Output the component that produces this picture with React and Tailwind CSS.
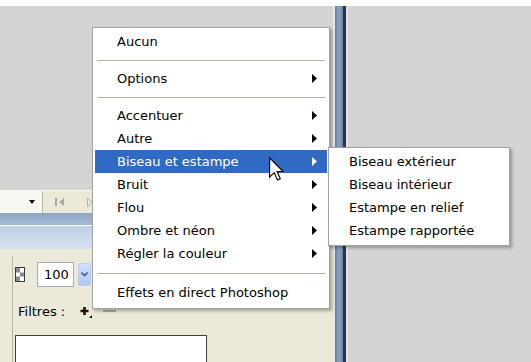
import React from 'react';

const font = { fontFamily: '"DejaVu Sans", Tahoma, sans-serif' };

const mainItems = [
    { label: 'Aucun' },
    { sep: true, h: 'h-[14px]' },
    { label: 'Options', sub: true },
    { sep: true, h: 'h-[14px]' },
    { label: 'Accentuer', sub: true },
    { label: 'Autre', sub: true },
    { label: 'Biseau et estampe', sub: true, active: true },
    { label: 'Bruit', sub: true },
    { label: 'Flou', sub: true },
    { label: 'Ombre et néon', sub: true },
    { label: 'Régler la couleur', sub: true },
    { sep: true, h: 'h-[16px]' },
    { label: 'Effets en direct Photoshop' },
];

const subItems = ['Biseau extérieur', 'Biseau intérieur', 'Estampe en relief', 'Estampe rapportée'];

const Arrow = ({ white }) => (
    <svg width="5" height="9" viewBox="0 0 5 9">
        <path d="M0 0 L5 4.5 L0 9 Z" fill={white ? '#ffffff' : '#000000'} />
    </svg>
);

const Cursor = () => (
    <svg width="15" height="24" viewBox="0 0 12 19" className="absolute left-[269px] top-[157px]">
        <path d="M0.5 0.5 L0.5 16 L4.2 12.4 L6.8 18.3 L9 17.3 L6.5 11.5 L11.3 11.5 Z" fill="#ffffff" stroke="#000000" strokeWidth="0.9" strokeLinejoin="miter" />
    </svg>
);

const Checker = () => (
    <svg width="10" height="15" viewBox="0 0 10 15">
        <rect x="0.5" y="0.5" width="9" height="14" fill="#ffffff" stroke="#3a3a3a" />
        <rect x="1" y="1" width="4" height="4.5" fill="#8a8a8a" />
        <rect x="5" y="5.5" width="4" height="4" fill="#8a8a8a" />
        <rect x="1" y="9.5" width="4" height="4.5" fill="#8a8a8a" />
    </svg>
);

const MainMenu = () => (
    <div className="absolute left-[92px] top-[27px] w-[238px] bg-white border border-[#a3a29c] shadow-[2px_2px_3px_rgba(0,0,0,0.3)] pt-[2px] pb-[4px] text-[13px] text-black">
        {mainItems.map((it, i) => it.sep ? (
            <div key={i} className={`${it.h} flex items-center px-[4px]`}>
                <div className="h-px w-full bg-[#b5b3a8]"></div>
            </div>
        ) : (
            <div key={i} className={`h-[23px] mx-[2px] flex items-center justify-between pl-[22px] pr-[10px] ${it.active ? 'bg-[#316ac5] text-white' : ''}`}>
                <span>{it.label}</span>
                {it.sub && <Arrow white={it.active} />}
            </div>
        ))}
    </div>
);

const SubMenu = () => (
    <div className="absolute left-[328px] top-[147px] w-[182px] bg-white border border-[#a3a29c] shadow-[2px_2px_3px_rgba(0,0,0,0.3)] pt-[2px] pb-[3px] text-[13px] text-black">
        {subItems.map((s) => (
            <div key={s} className="h-[23px] flex items-center pl-[20px]">{s}</div>
        ))}
    </div>
);

export default function App() {
    return (
        <div className="relative w-[531px] h-[362px] overflow-hidden flex flex-col bg-[#d4d4d4]" style={font}>
            <div className="h-[6px] bg-white"></div>
            <div className="flex flex-1">
                {/* left dock */}
                <div className="w-[333px] flex flex-col">
                    <div className="h-[184px]"></div>
                    {/* toolbar */}
                    <div className="h-[23px] bg-[#ece9d8] border-t border-[#f8f7f2] flex items-center">
                        <div className="w-[43px] h-full bg-[#f7f6f1] border-r border-[#bcb9ad] flex items-center justify-end pr-[7px]">
                            <svg width="6" height="4" viewBox="0 0 6 4"><path d="M0 0 L6 0 L3 4 Z" fill="#000" /></svg>
                        </div>
                        <div className="ml-[12px] flex items-center gap-[2px]">
                            <div className="w-[2px] h-[8px] bg-[#a8a8a8]"></div>
                            <svg width="5" height="8" viewBox="0 0 5 8"><path d="M5 0 L0 4 L5 8 Z" fill="#a8a8a8" /></svg>
                        </div>
                        <svg className="ml-[23px]" width="6" height="9" viewBox="0 0 6 9"><path d="M0.5 0.5 L5.5 4.5 L0.5 8.5 Z" fill="none" stroke="#b0b0b0" /></svg>
                    </div>
                    {/* panel header */}
                    <div className="h-[12px] bg-gradient-to-b from-[#8ba6c3] to-[#a6bcd4]"></div>
                    <div className="h-px bg-white"></div>
                    <div className="h-[23px] bg-gradient-to-b from-[#bfd1e6] to-[#d4e1ef]"></div>
                    {/* panel body */}
                    <div className="flex-1 bg-[#ece9d8] pt-[7px] pl-[12px]">
                        <div className="h-full border-l border-[#b9b7ab] pl-[2px] flex flex-col">
                            <div className="flex items-center h-[25px] mt-[6px]">
                                <Checker />
                                <div className="ml-[12px] w-[37px] h-[25px] bg-white border border-[#a5acb5] flex items-center pl-[6px] text-[13px] text-black">100</div>
                                <div className="ml-[4px] w-[13px] h-[23px] rounded-[2px] bg-gradient-to-b from-[#d2e0fb] to-[#aec6f0] border border-[#b9cdf3] flex items-center justify-center">
                                    <svg width="7" height="5" viewBox="0 0 7 5"><path d="M0.5 0.5 L3.5 3.5 L6.5 0.5" fill="none" stroke="#4d6185" strokeWidth="1.6" /></svg>
                                </div>
                            </div>
                            <div className="flex items-center h-[20px] mt-[15px] text-[13px] text-black">
                                <span className="ml-[3px]">Filtres :</span>
                                <svg className="ml-[15px]" width="13" height="13" viewBox="0 0 13 13">
                                    <path d="M4.5 1 L4.5 9 M0.5 5 L8.5 5" stroke="#2a0a0a" strokeWidth="2.6" />
                                    <path d="M9 12 L12 9 L12 12 Z" fill="#000" />
                                </svg>
                                <div className="ml-[10px] w-[13px] h-[2px] bg-[#a9a9a9] -mt-[3px]"></div>
                            </div>
                            <div className="mt-[13px] w-[192px] flex-1 bg-white border border-[#404040] border-b-0"></div>
                        </div>
                    </div>
                </div>
                {/* splitter */}
                <div className="w-[15px] flex">
                    <div className="w-[2px] bg-[#e6e6e6]"></div>
                    <div className="w-[8px] bg-gradient-to-r from-[#5f80a2] via-[#8aa6c3] to-[#6684a4]"></div>
                    <div className="w-[3px] bg-[#2c3640]"></div>
                    <div className="w-[2px] bg-[#e4e4e4]"></div>
                </div>
                <div className="flex-1"></div>
            </div>
            <MainMenu />
            <SubMenu />
            <Cursor />
        </div>
    );
}
